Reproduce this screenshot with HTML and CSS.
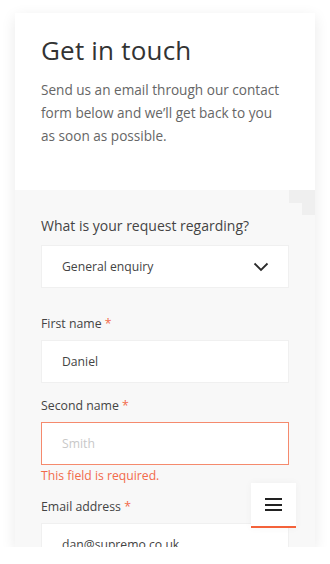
FILE: index.html
```html
<!DOCTYPE html>
<html lang="en">
<head>
  <meta charset="UTF-8">
  <meta name="viewport" content="width=device-width, initial-scale=1.0">
  <title>Get in touch</title>
  <link rel="stylesheet" href="styles.css">
</head>
<body>

<div class="frame">
  <div class="intro">
    <h1 class="title">Get in touch</h1>
    <p class="lead">
      Send us an email through our contact form below and we’ll get back to you as soon as possible.
    </p>
  </div>

  <form class="form">
    <div class="corner">
      <span class="corner-big"></span>
      <span class="corner-small"></span>
    </div>

    <label class="question">What is your request regarding?</label>
    <div class="select">
      <span>General enquiry</span>
      <svg width="16" height="10" viewBox="0 0 16 10">
        <path d="M1.5 1.5 L8 8 L14.5 1.5" fill="none" stroke="#2b2b2b" stroke-width="1.8" />
      </svg>
    </div>

    <div class="field">
      <label>First name <i>*</i></label>
      <div class="input">Daniel</div>
    </div>

    <div class="field">
      <label>Second name <i>*</i></label>
      <div class="input input-error placeholder">Smith</div>
      <div class="error">This field is required.</div>
    </div>

    <div class="field">
      <label>Email address <i>*</i></label>
      <div class="input">dan@supremo.co.uk</div>
    </div>
  </form>

  <button class="menu" type="button">
    <span></span>
    <span></span>
    <span></span>
  </button>
</div>

</body>
</html>
```

FILE: styles.css
```css
* {
  padding: 0;
  margin: 0;
  box-sizing: border-box;
}

body {
  font-family: 'Open Sans', 'Liberation Sans', sans-serif;
  background-color: #fff;
  color: #444;
  padding: 13px 15px 0;
}

.frame {
  position: relative;
  width: 300px;
  height: 534px;
  overflow: hidden;
  background-color: #f8f8f8;
  box-shadow: 0 4px 14px rgba(0,0,0,0.09);
}

.intro {
  background-color: #fff;
  height: 177px;
  padding: 21px 26px 0;
}

.title {
  font-size: 26px;
  font-weight: normal;
  line-height: 32px;
  color: #333;
  letter-spacing: 0.2px;
}

.lead {
  margin-top: 12px;
  font-size: 13.6px;
  line-height: 23px;
  color: #666;
}

.form {
  position: relative;
  padding: 26px 26px 0;
}

.corner {
  position: absolute;
  top: 0;
  right: 0;
  display: flex;
  flex-direction: column;
  align-items: flex-end;
}

.corner-big {
  width: 26px;
  height: 13px;
  background-color: #efefef;
}

.corner-small {
  width: 13px;
  height: 12px;
  background-color: #efefef;
}

.question {
  display: block;
  font-size: 14px;
  line-height: 20px;
  color: #444;
  margin-bottom: 9px;
}

.select {
  display: flex;
  align-items: center;
  justify-content: space-between;
  height: 43px;
  padding: 0 19px 0 20px;
  background-color: #fff;
  border: 1px solid #f0f0f0;
  font-size: 12.2px;
  color: #444;
  margin-bottom: 27px;
}

.field {
  margin-bottom: 14px;
}

.field label {
  display: block;
  font-size: 12.3px;
  line-height: 17px;
  color: #444;
  margin-bottom: 8px;
}

.field label i {
  font-style: normal;
  color: #f26a4b;
}

.input {
  height: 43px;
  padding: 0 20px;
  display: flex;
  align-items: center;
  background-color: #fff;
  border: 1px solid #f0f0f0;
  font-size: 12.2px;
  color: #444;
}

.input-error {
  border-color: #f58a6d;
}

.placeholder {
  color: #c8c8c8;
}

.error {
  font-size: 12.2px;
  line-height: 17px;
  margin-top: 2px;
  margin-bottom: 2px;
  color: #f26a4b;
}

.menu {
  position: absolute;
  left: 236px;
  top: 470px;
  width: 45px;
  height: 45px;
  background-color: #fff;
  border: 0;
  border-bottom: 2px solid #f4623a;
  display: flex;
  flex-direction: column;
  align-items: center;
  justify-content: center;
  gap: 3.5px;
  box-shadow: 0 0 8px rgba(0,0,0,0.04);
}

.menu span {
  display: block;
  width: 17px;
  height: 2px;
  background-color: #222;
}
```
